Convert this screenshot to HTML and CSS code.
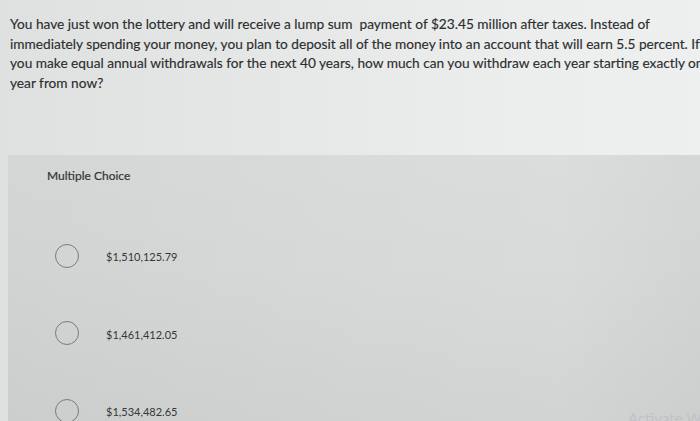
FILE: index.html
```html
<!DOCTYPE html>
<html>
<head>
<meta charset="utf-8">
<link rel="stylesheet" href="styles.css">
</head>
<body>
<div class="page">
  <p class="question">You have just won the lottery and will receive a lump sum&nbsp; payment of $23.45 million after taxes. Instead of<br>immediately spending your money, you plan to deposit all of the money into an account that will earn 5.5 percent. If<br>you make equal annual withdrawals for the next 40 years, how much can you withdraw each year starting exactly one<br>year from now?</p>
  <section class="panel">
    <div class="label">Multiple Choice</div>
    <div class="options">
      <div class="option"><span class="radio"></span><span class="answer">$1,510,125.79</span></div>
      <div class="option"><span class="radio"></span><span class="answer">$1,461,412.05</span></div>
      <div class="option"><span class="radio"></span><span class="answer">$1,534,482.65</span></div>
    </div>
  </section>
  <div class="watermark">Activate Windows</div>
</div>
</body>
</html>
```
FILE: styles.css
```css
html, body {
  margin: 0;
  padding: 0;
  height: 100%;
  overflow: hidden;
}
body {
  background: linear-gradient(90deg, #dfe1e1 0%, #e6e8e8 40%, #eceeee 75%, #eef0f0 100%);
  font-family: "Lato", "Liberation Sans", sans-serif;
}
.page {
  position: relative;
  height: 100%;
  display: flex;
  flex-direction: column;
}
.question {
  margin: 0;
  padding: 14px 0 0 10px;
  font-size: 13.7px;
  line-height: 19.5px;
  color: #2c2e2e;
  white-space: nowrap;
  overflow: hidden;
  -webkit-text-stroke: 0.15px #2c2e2e;
}
.panel {
  flex: 1;
  margin: 63px 0 0 8px;
  padding: 14px 0 0 39px;
  overflow: hidden;
  background:
    linear-gradient(180deg, rgba(255,255,255,0.06) 0%, rgba(255,255,255,0) 40%, rgba(0,0,0,0.03) 100%),
    linear-gradient(90deg, #d2d4d4 0%, #d7d9d9 50%, #d9dbdb 80%, #d3d5d5 100%);
}
.label {
  font-size: 12px;
  line-height: 14px;
  color: #333535;
  -webkit-text-stroke: 0.2px #333535;
}
.options {
  display: flex;
  flex-direction: column;
  gap: 52.5px;
  padding-top: 60px;
}
.option {
  display: flex;
  align-items: center;
  height: 25px;
}
.radio {
  width: 22px;
  height: 22px;
  border: 1.5px solid #7a7c7c;
  border-radius: 50%;
  margin-left: 8px;
  flex: none;
}
.answer {
  margin-left: 27px;
  padding-top: 2px;
  font-size: 11px;
  color: #353737;
}
.watermark {
  position: absolute;
  left: 628px;
  top: 409px;
  font-size: 15px;
  color: #bfc3c6;
  white-space: nowrap;
}
```
